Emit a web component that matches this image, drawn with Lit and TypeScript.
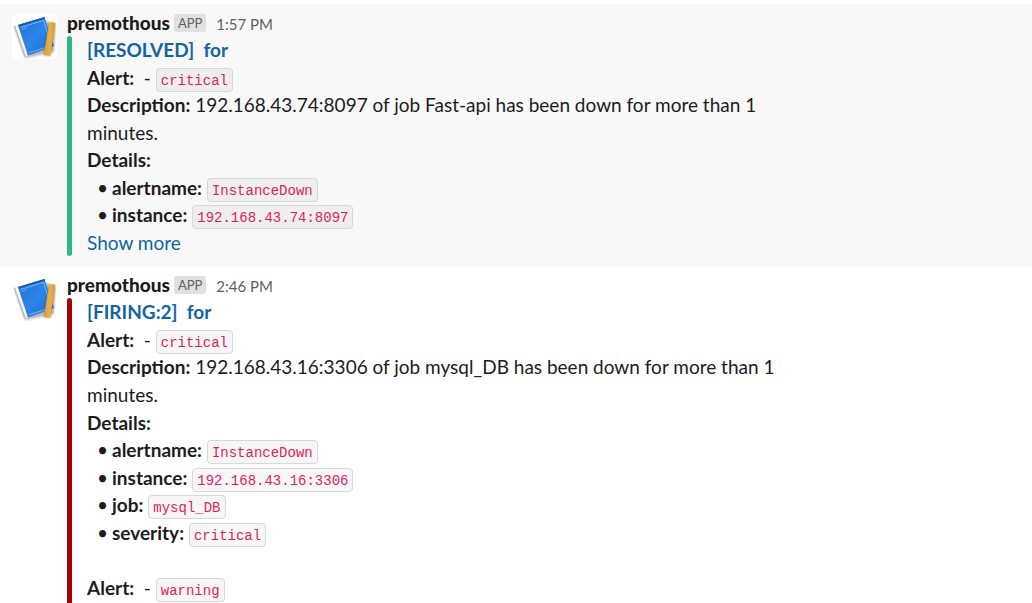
import { LitElement, html, css, svg } from "lit";
import { customElement, property } from "lit/decorators.js";

interface Field {
  name: string;
  value: string;
}

interface Alert {
  severity: string;
  description?: string;
  fields?: Field[];
}

interface Message {
  time: string;
  title: string;
  tone: "good" | "danger";
  hovered?: boolean;
  collapsed?: boolean;
  alerts: Alert[];
}

const messages: Message[] = [
  {
    time: "1:57 PM",
    title: "[RESOLVED]",
    tone: "good",
    hovered: true,
    collapsed: true,
    alerts: [
      {
        severity: "critical",
        description:
          "192.168.43.74:8097 of job Fast-api has been down for more than 1 minutes.",
        fields: [
          { name: "alertname", value: "InstanceDown" },
          { name: "instance", value: "192.168.43.74:8097" },
        ],
      },
    ],
  },
  {
    time: "2:46 PM",
    title: "[FIRING:2]",
    tone: "danger",
    alerts: [
      {
        severity: "critical",
        description:
          "192.168.43.16:3306 of job mysql_DB has been down for more than 1 minutes.",
        fields: [
          { name: "alertname", value: "InstanceDown" },
          { name: "instance", value: "192.168.43.16:3306" },
          { name: "job", value: "mysql_DB" },
          { name: "severity", value: "critical" },
        ],
      },
      { severity: "warning" },
    ],
  },
];

@customElement("bot-avatar")
export class BotAvatar extends LitElement {
  static styles = css`
    :host {
      display: block;
      flex: none;
      width: 45px;
      height: 45px;
      border-radius: 5px;
      overflow: hidden;
      background: #fff;
    }
    svg {
      display: block;
      width: 100%;
      height: 100%;
    }
  `;

  render() {
    return html`<svg viewBox="0 0 45 45" aria-hidden="true">
      ${svg`
      <defs>
        <linearGradient id="cover" x1="0" y1="0" x2="1" y2="1">
          <stop offset="0" stop-color="#1f6fcd" />
          <stop offset="0.5" stop-color="#2e86ea" />
          <stop offset="1" stop-color="#1c68cc" />
        </linearGradient>
        <linearGradient id="ruler" x1="0" y1="0" x2="1" y2="0">
          <stop offset="0" stop-color="#d99a2b" />
          <stop offset="0.5" stop-color="#ebb045" />
          <stop offset="1" stop-color="#dc9c30" />
        </linearGradient>
        <filter id="soft" x="-20%" y="-20%" width="140%" height="140%">
          <feGaussianBlur stdDeviation="1" />
        </filter>
      </defs>
      <path d="M3 14 L13 44 L42 38 L43 12 L35 7 Z" fill="#777" opacity="0.55" filter="url(#soft)" />
      <path d="M1.5 12 L6 10.5 L16 41.5 L12.5 43.5 Z" fill="#f4f4f4" />
      <path d="M1.5 12 L3 11.5 L14 42.6 L12.5 43.5 Z" fill="#bdbdbd" />
      <path d="M6 11 L32.5 3 L42 32 L16 41.5 Z" fill="url(#cover)" />
      <path d="M6 11 L32.5 3 L33 4.5 L6.6 12.6 Z" fill="#1557ad" />
      <path d="M8.5 13.5 L31.5 6.4 L39.5 31.6 L17 38.8" fill="none" stroke="#8fc2f7" stroke-width="0.8" />
      <path d="M9.5 15.5 L15 13.8" stroke="#8fc2f7" stroke-width="0.6" />
      <path d="M31.5 41.5 L37.5 8.5 L43.5 9.2 L38.5 42.3 Z" fill="#444" opacity="0.4" filter="url(#soft)" />
      <path d="M37.3 8 L43.4 8.8 L38.3 42 L31.8 40.8 Z" fill="url(#ruler)" />
      `}
    </svg>`;
  }
}

@customElement("alert-message")
export class AlertMessage extends LitElement {
  @property({ attribute: false }) message!: Message;

  static styles = css`
    :host {
      display: flex;
    }
    .message {
      display: flex;
      flex: 1;
      align-items: stretch;
      gap: 10px;
      box-sizing: border-box;
      min-width: 0;
      padding: 10px 12px 0;
    }
    .hovered {
      background: #f8f8f8;
      padding-bottom: 10px;
    }
    .content {
      display: flex;
      flex-direction: column;
      flex: 1;
      min-width: 0;
    }
    .head {
      display: flex;
      align-items: center;
      height: 18px;
      padding-bottom: 4px;
      line-height: 18px;
    }
    .author {
      font-weight: 900;
      font-size: 19px;
    }
    .badge {
      margin: 0 10px 0 4px;
      padding: 0 4px;
      border-radius: 3px;
      background: #e0e0e0;
      color: #616061;
      font-size: 13px;
    }
    .time {
      padding-top: 2px;
      color: #616061;
      font-size: 15px;
    }
    .attachment {
      display: flex;
      flex: 1;
      gap: 15px;
      max-width: 750px;
    }
    .bar {
      flex: none;
      width: 5px;
      border-radius: 5px;
    }
    .good {
      background: #2eb886;
    }
    .danger {
      background: #a30200;
      border-radius: 5px 5px 0 0;
    }
    .body {
      flex: 1;
      min-width: 0;
    }
    p,
    ul {
      margin: 0;
      padding: 0;
    }
    .title {
      font-weight: 700;
      white-space: pre-wrap;
    }
    .severity {
      white-space: pre-wrap;
    }
    .next {
      margin-top: 28px;
    }
    a {
      color: #1264a3;
      text-decoration: none;
    }
    ul {
      padding-left: 10px;
      list-style: none;
    }
    li {
      display: flex;
    }
    .bullet {
      width: 15px;
    }
    .pair {
      min-width: 0;
    }
    b {
      font-weight: 700;
    }
    code {
      padding: 4px 4px 2px;
      border: 1px solid #d8d8d8;
      border-radius: 4px;
      background: #f6f6f6;
      color: #e01e5a;
      font-family: "Liberation Mono", monospace;
      font-size: 14px;
      line-height: 20px;
    }
    .hovered code {
      background: #efefef;
    }
    button {
      display: block;
      padding: 0;
      border: 0;
      background: none;
      color: #1264a3;
      font: inherit;
      cursor: pointer;
    }
  `;

  private renderAlert(alert: Alert, index: number) {
    return html`
      <p class="severity ${index > 0 ? "next" : ""}"><b>Alert:</b>${"\u00a0 - "}<code>${alert.severity}</code></p>
      ${alert.description
        ? html`<p><b>Description:</b> ${alert.description}</p>`
        : ""}
      ${alert.fields
        ? html`<p><b>Details:</b></p>
            <ul>
              ${alert.fields.map(
                (f) => html`<li>
                  <span class="bullet">•</span>
                  <span class="pair"><b>${f.name}:</b> <code>${f.value}</code></span>
                </li>`
              )}
            </ul>`
        : ""}
    `;
  }

  render() {
    const m = this.message;
    return html`<article class="message ${m.hovered ? "hovered" : ""}">
      <bot-avatar></bot-avatar>
      <div class="content">
        <header class="head">
          <span class="author">premothous</span>
          <span class="badge">APP</span>
          <time class="time">${m.time}</time>
        </header>
        <div class="attachment">
          <div class="bar ${m.tone}"></div>
          <div class="body">
            <p class="title"><a href="#">${m.title}${"  for"}</a></p>
            ${m.alerts.map((a, i) => this.renderAlert(a, i))}
            ${m.collapsed ? html`<button type="button">Show more</button>` : ""}
          </div>
        </div>
      </div>
    </article>`;
  }
}

@customElement("app-root")
export class AppRoot extends LitElement {
  static styles = css`
    :host {
      display: flex;
      flex-direction: column;
      box-sizing: border-box;
      min-height: 100vh;
      padding-top: 4px;
      background: #fff;
      color: #1d1c1d;
      font-family: Lato, sans-serif;
      font-size: 19px;
      line-height: 1.45;
    }
    alert-message:last-child {
      flex: 1;
    }
  `;

  render() {
    return html`${messages.map(
      (m) => html`<alert-message .message=${m}></alert-message>`
    )}`;
  }
}
